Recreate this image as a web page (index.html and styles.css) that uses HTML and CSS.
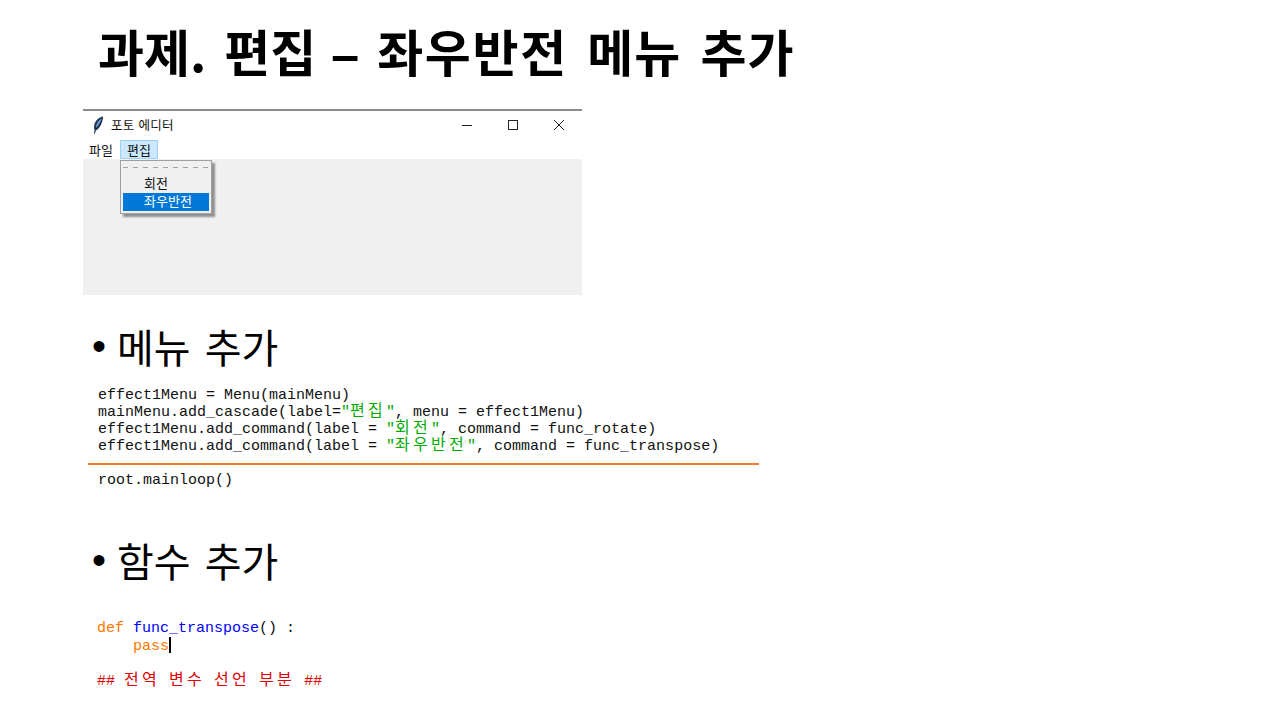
FILE: index.html
```html
<!DOCTYPE html>
<html lang="ko">
<head>
<meta charset="utf-8">
<title>과제</title>
<link rel="stylesheet" href="styles.css">
</head>
<body>
<main class="slide">
  <h1 class="title">과제. 편집 <span class="dash">–</span> <span class="wide">좌우반전</span> <span class="tail">메뉴 추가</span></h1>
  <section class="window">
    <div class="titlebar">
      <div class="app-title">
        <svg class="feather" width="12" height="18" viewBox="0 0 12 18"><path d="M11 .6C7.2 1.2 3.2 4.6 2.2 9.4 1.8 11.4 2 13 2.7 14L1.8 17.4 2.9 17.6 3.9 14.4C6.6 13.4 8.8 10.4 10.2 5.6 10.8 3.6 11.2 1.8 11 .6Z" fill="#1f3550"/><path d="M9.6 2.6C6.6 4.4 4.2 7.4 3.7 12 6 10.2 8.4 7 9.6 2.6Z" fill="#6f9fd0"/></svg>
        <span class="app-name">포토 에디터</span>
      </div>
      <div class="controls">
        <svg width="12" height="12" viewBox="0 0 12 12"><path d="M1 6.5H11" stroke="#222" fill="none"/></svg>
        <svg width="12" height="12" viewBox="0 0 12 12"><rect x="1.5" y="1.5" width="9" height="9" stroke="#222" fill="none"/></svg>
        <svg width="12" height="12" viewBox="0 0 12 12"><path d="M1 1 11 11M11 1 1 11" stroke="#222" fill="none"/></svg>
      </div>
    </div>
    <nav class="menubar">
      <span class="menu-item">파일</span>
      <span class="menu-item active">편집</span>
    </nav>
    <div class="client">
      <div class="dropdown">
        <div class="tearoff"></div>
        <div class="drop-item">회전</div>
        <div class="drop-item selected">좌우반전</div>
      </div>
    </div>
  </section>

  <h2 class="bullet first"><span class="dot">•</span><span>메뉴 추가</span></h2>
  <div class="code code-a">
    <div class="line">effect1Menu = Menu(mainMenu)</div>
    <div class="line">mainMenu.add_cascade(label=<span class="str">"<span class="ko">편집</span>"</span>, menu = effect1Menu)</div>
    <div class="line">effect1Menu.add_command(label = <span class="str">"<span class="ko">회전</span>"</span>, command = func_rotate)</div>
    <div class="line">effect1Menu.add_command(label = <span class="str">"<span class="ko">좌우반전</span>"</span>, command = func_transpose)</div>
  </div>
  <hr class="rule">
  <div class="code code-b"><div class="line">root.mainloop()</div></div>

  <h2 class="bullet second"><span class="dot">•</span><span>함수 추가</span></h2>
  <div class="code code-c">
    <div class="line"><span class="kw">def</span> <span class="fn">func_transpose</span>() :</div>
    <div class="line">    <span class="kw">pass</span><span class="caret"></span></div>
  </div>
  <div class="code code-d"><div class="line cm">## <span class="ko">전역</span> <span class="ko">변수</span> <span class="ko">선언</span> <span class="ko">부분</span> ##</div></div>
</main>
</body>
</html>
```
FILE: styles.css
```css
* { box-sizing: border-box; }
html, body { margin: 0; padding: 0; background: #fff; }
body { width: 1280px; height: 720px; overflow: hidden; font-family: "Noto Sans CJK KR", "Noto Sans", sans-serif; color: #000; }
.slide { display: flex; flex-direction: column; align-items: flex-start; height: 720px; padding-left: 83px; }

.title { margin: 18px 0 0 15px; font-size: 50px; line-height: 64px; height: 91px; font-weight: 700; white-space: nowrap; word-spacing: 4px; }
.dash { font-family: "Liberation Sans", sans-serif; margin-left: -3px; }
.wide { letter-spacing: 1.75px; }
.tail { letter-spacing: 1.1px; margin-left: 1px; }

.window { width: 499px; height: 186px; display: flex; flex-direction: column; border-top: 2px solid #8c8c8c; font-size: 12px; background: #fff; }
.titlebar { height: 29px; padding-bottom: 1px; display: flex; justify-content: space-between; align-items: center; }
.app-title { display: flex; align-items: center; gap: 7px; padding-left: 9px; color: #111; font-size: 12.5px; letter-spacing: .3px; }
.app-name { padding-bottom: 2px; }
.feather { display: block; }
.controls { display: flex; gap: 34px; padding-right: 17px; }
.controls svg { display: block; }
.menubar { height: 19px; display: flex; align-items: stretch; padding-left: 1px; }
.menu-item { display: flex; align-items: center; padding: 0 4px 1px; margin-right: 1px; border: 1px solid transparent; font-size: 13px; color: #111; }
.menu-item.active { background: #cce8ff; border-color: #99d1ff; padding: 0 6px 1px; margin-left: 1px; }
.client { flex: 1; background: #f0f0f0; position: relative; }
.dropdown { position: absolute; left: 37px; top: 1px; width: 92px; height: 54px; background: #f0f0f0; border: 1px solid #a0a0a0; box-shadow: 3px 3px 2px #8f8f8f; padding: 2px; display: flex; flex-direction: column; }
.tearoff { height: 12px; flex: none; background: repeating-linear-gradient(90deg, #a0a0a0 0 5px, transparent 5px 10px) 0 4px / 100% 1px no-repeat; }
.drop-item { height: 18px; flex: none; padding-left: 21px; font-size: 13px; line-height: 16px; color: #111; white-space: nowrap; }
.drop-item.selected { background: #0078d7; color: #fff; }

.bullet { margin: 0; padding-left: 9px; display: flex; align-items: center; font-size: 40px; line-height: 54px; font-weight: 400; white-space: nowrap; word-spacing: 3px; }
.bullet.first { margin-top: 24px; }
.bullet.second { margin-top: 44px; }
.dot { width: 25px; flex: none; font-family: "Liberation Sans", sans-serif; }

.code { padding-left: 15px; font-family: "Liberation Mono", "Noto Sans CJK KR", monospace; font-size: 15px; color: #111; }
.line { height: 17px; line-height: 17px; white-space: pre; }
.code-a { margin-top: 14px; }
.code-b { margin-top: 7px; }
.code-c { margin-top: 33px; padding-left: 14px; }
.code-d { margin-top: 19px; padding-left: 14px; }
.ko { letter-spacing: 3.28px; font-size: 16px; line-height: 0; font-family: "Noto Sans CJK KR", sans-serif; }
.str { color: #00aa00; }
.kw { color: #ff7700; }
.fn { color: #0000ff; }
.cm { color: #dd0000; }
.caret { display: inline-block; width: 2px; height: 16px; background: #000; vertical-align: -3px; }
.rule { width: 671px; height: 2px; margin: 8px 0 0 5px; border: 0; background: #ed7d31; }
```
